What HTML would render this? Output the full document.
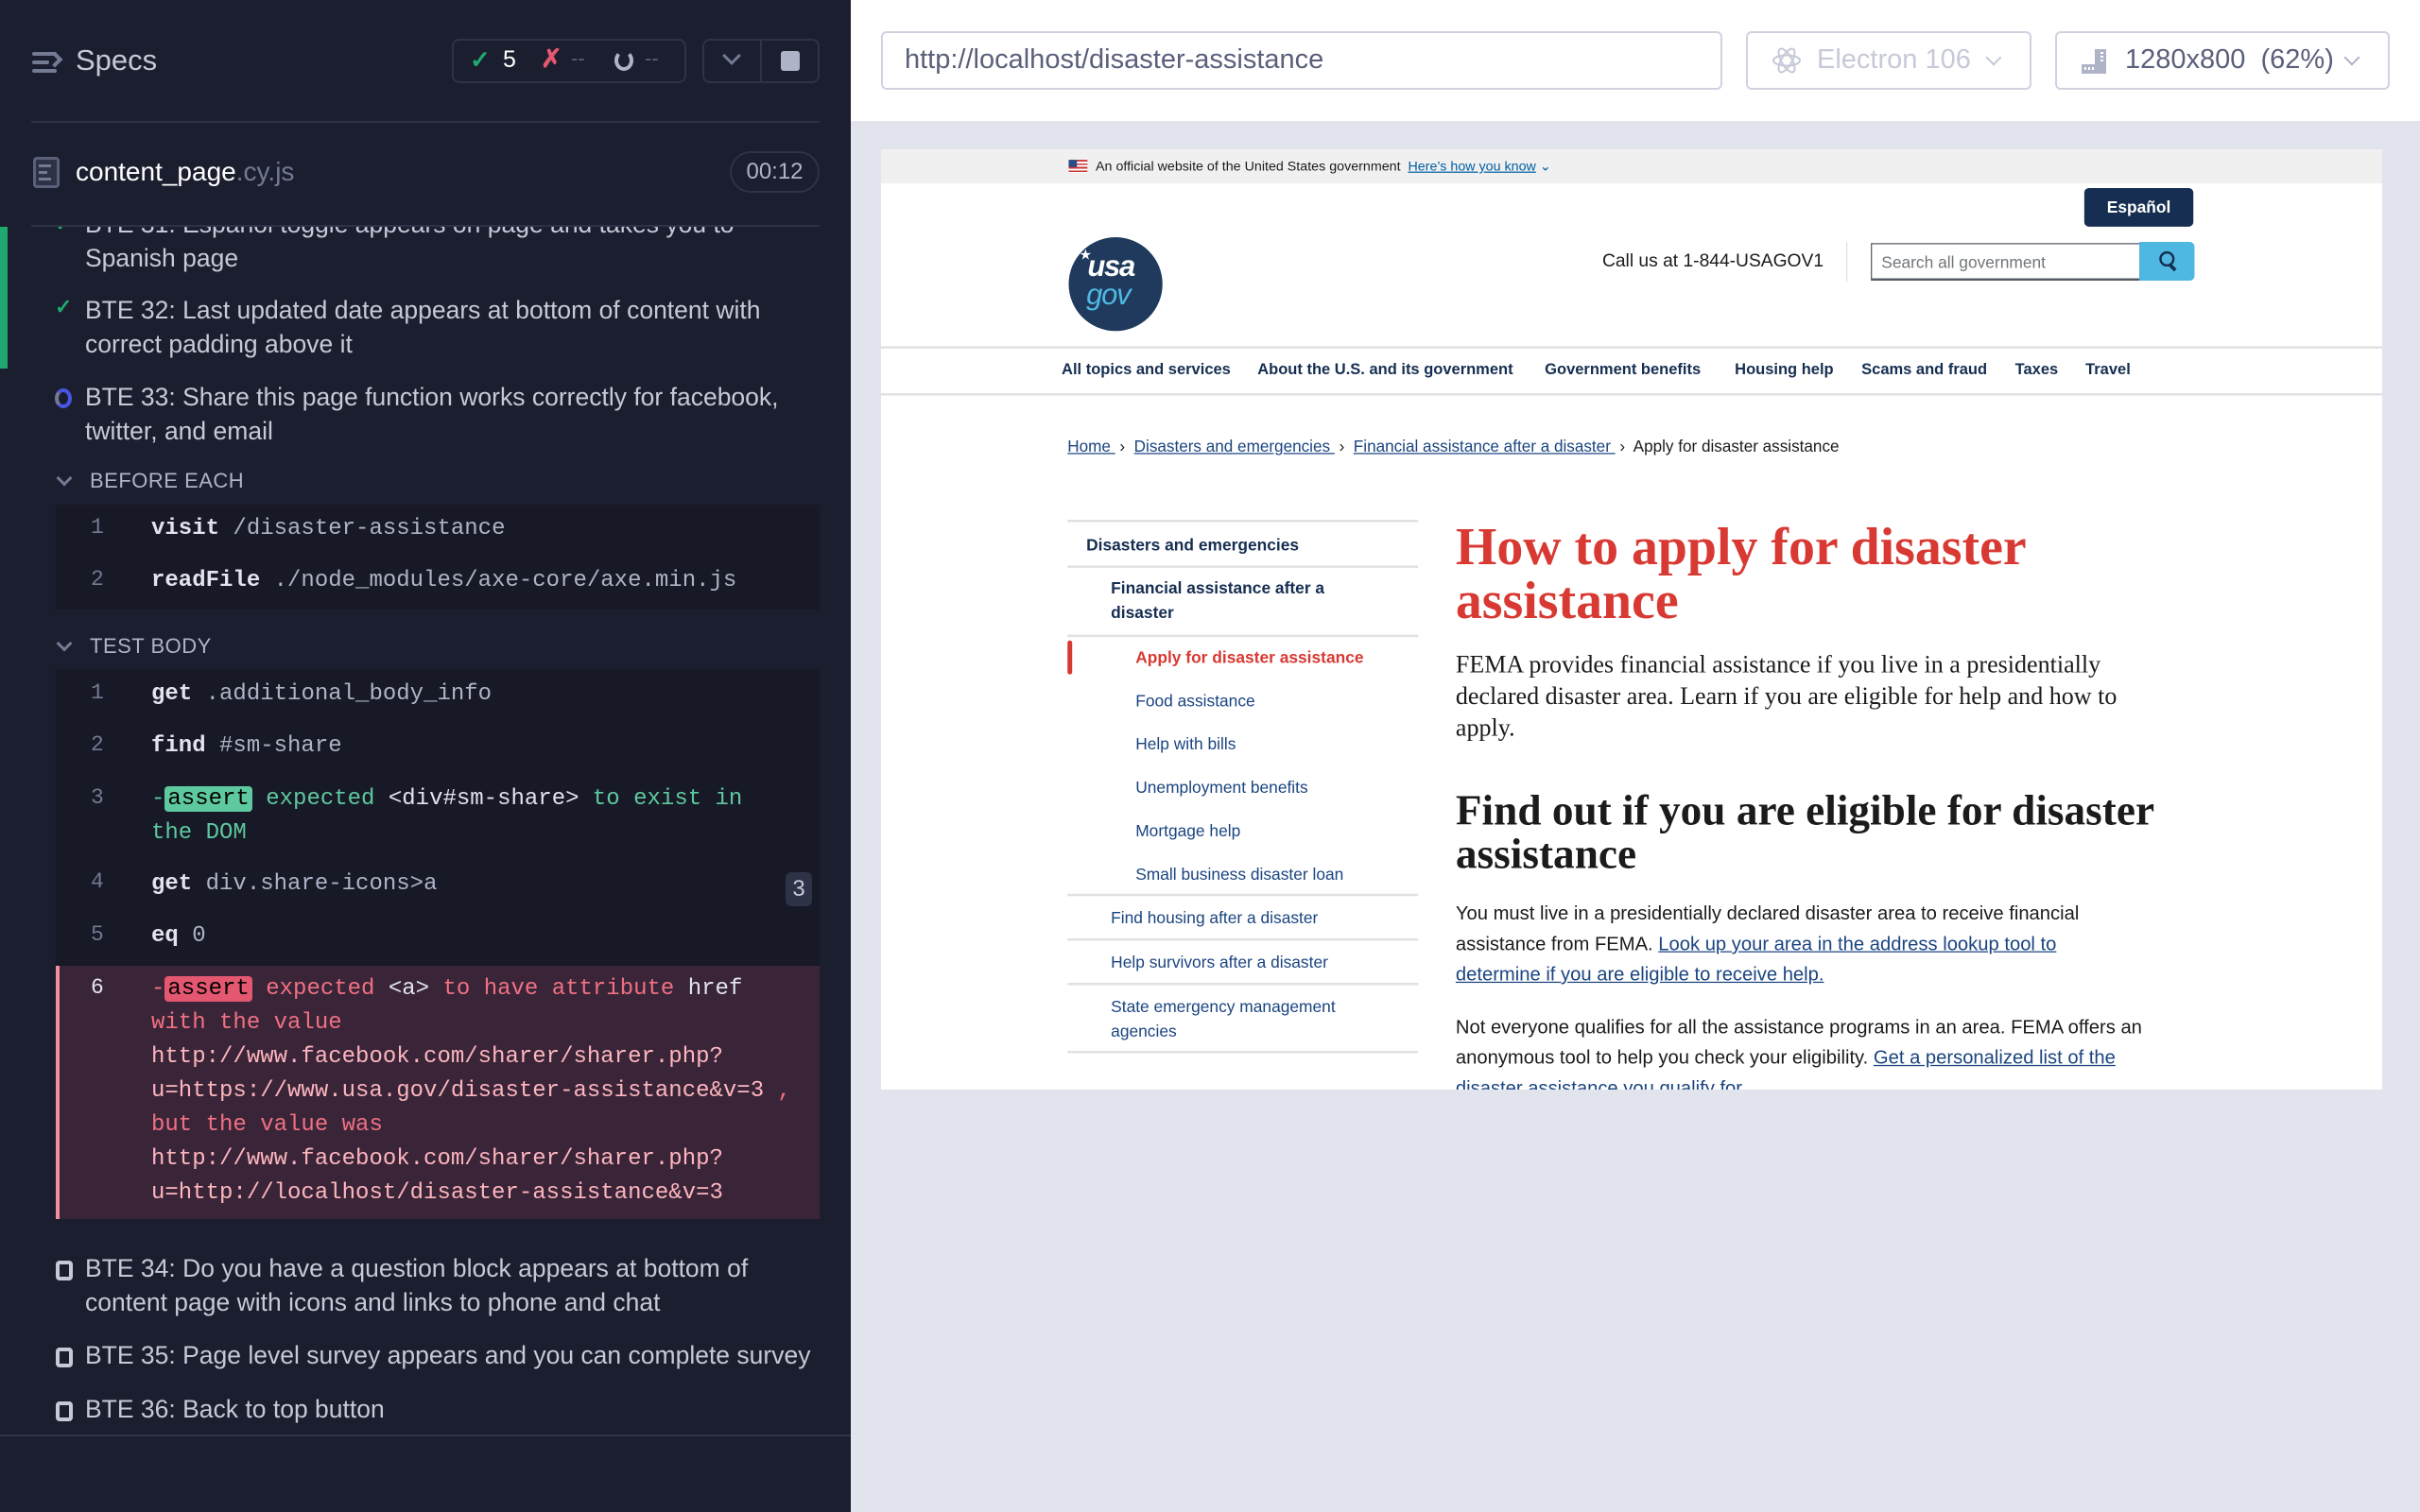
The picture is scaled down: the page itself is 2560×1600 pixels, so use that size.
<!DOCTYPE html>
<html><head><meta charset="utf-8">
<style>
*{margin:0;padding:0;box-sizing:border-box}
body{width:2560px;height:1600px;overflow:hidden;background:#e1e3ed;font-family:"Liberation Sans",sans-serif;position:relative}
.a{position:absolute;white-space:nowrap}
#left{position:absolute;left:0;top:0;width:900px;height:1600px;background:#1b1e2e;overflow:hidden}
.t{position:absolute;left:90px;font-size:26.5px;line-height:36px;color:#c6c9d8;white-space:nowrap}
.code{font-family:"Liberation Mono",monospace;font-size:24px;line-height:36px;position:absolute;white-space:nowrap}
.ln{position:absolute;left:96px;font-family:"Liberation Mono",monospace;font-size:23px;color:#747994}
.kw{color:#e1e3ed;font-weight:bold}
.mu{color:#afb3c7}
.g{color:#5ec99e}
.r{color:#f07083}
.box{position:absolute;border:2px solid #2e3247;border-radius:8px}
.hdr{position:absolute;left:95px;font-size:22px;color:#afb3c7;letter-spacing:0.5px}
.chev{position:absolute;left:62px;width:12px;height:12px;border-right:3px solid #747994;border-bottom:3px solid #747994;transform:rotate(45deg)}
.cb{position:absolute;left:59px;width:18px;height:21px;border:4px solid #c6c9d8;border-radius:4px}
#pg{position:absolute;left:932px;top:158px;width:1280px;height:802px;transform-origin:0 0;transform:scale(1.2406);background:#fff;overflow:hidden;font-family:"Liberation Sans",sans-serif}
.nav{position:absolute;top:180px;font-size:13.3px;font-weight:bold;color:#162e51}
.sb{position:absolute;font-size:14px;color:#1a4480;line-height:21px}
.hl{position:absolute;left:159px;width:299px;height:2px;background:#dfe1e2}
a{color:#1a4480;text-decoration:underline}
</style></head><body>
<div id="left">
  <div class="a" style="left:34px;top:55px;width:26px;height:4px;background:#747994;border-radius:2px"></div>
  <div class="a" style="left:34px;top:64px;width:18px;height:4px;background:#747994;border-radius:2px"></div>
  <div class="a" style="left:34px;top:73px;width:26px;height:4px;background:#747994;border-radius:2px"></div>
  <div class="a" style="left:52px;top:57px;width:12px;height:12px;border-right:4px solid #747994;border-top:4px solid #747994;transform:rotate(45deg)"></div>
  <div class="a" style="left:80px;top:46px;font-size:31px;color:#c6c9d8">Specs</div>
  <div class="box" style="left:478px;top:41px;width:248px;height:47px"></div>
  <div class="a" style="left:497px;top:48px;font-size:26px;color:#1fa971;font-weight:bold">✓</div>
  <div class="a" style="left:532px;top:49px;font-size:25px;color:#fff">5</div>
  <div class="a" style="left:572px;top:47px;font-size:27px;color:#e45770;font-weight:bold">✗</div>
  <div class="a" style="left:604px;top:49px;font-size:22px;color:#5a5f7a">--</div>
  <div class="a" style="left:650px;top:53px;width:20px;height:22px;border:4px solid #afb3c7;border-top-color:transparent;border-radius:50%"></div>
  <div class="a" style="left:682px;top:49px;font-size:22px;color:#5a5f7a">--</div>
  <div class="box" style="left:743px;top:41px;width:124px;height:47px"></div>
  <div class="a" style="left:804px;top:43px;width:2px;height:43px;background:#2e3247"></div>
  <div class="a" style="left:767px;top:52px;width:14px;height:14px;border-right:3px solid #747994;border-bottom:3px solid #747994;transform:rotate(45deg)"></div>
  <div class="a" style="left:826px;top:54px;width:20px;height:21px;background:#afb3c7;border-radius:3px"></div>
  <div class="a" style="left:33px;top:128px;width:834px;height:2px;background:#2e3247"></div>
  <div class="a" style="left:35px;top:166px;width:28px;height:33px;border:3px solid #5a5f7a;border-radius:4px;background:#2e3247"></div>
  <div class="a" style="left:41px;top:174px;width:13px;height:3px;background:#747994"></div>
  <div class="a" style="left:41px;top:181px;width:9px;height:3px;background:#747994"></div>
  <div class="a" style="left:41px;top:188px;width:13px;height:3px;background:#747994"></div>
  <div class="a" style="left:80px;top:166px;font-size:28px;color:#fff">content_page<span style="color:#747994">.cy.js</span></div>
  <div class="a" style="left:772px;top:160px;width:95px;height:44px;border:2px solid #2e3247;border-radius:22px;color:#afb3c7;font-size:24px;text-align:center;line-height:40px">00:12</div>
  <div class="a" style="left:33px;top:238px;width:834px;height:2px;background:#2e3247"></div>
  <div style="position:absolute;left:0;top:240px;width:900px;height:1280px;overflow:hidden">
    <div class="a" style="left:0;top:0;width:8px;height:150px;background:#1fa971"></div>
    <div class="t" style="top:-21px">BTE 31: Español toggle appears on page and takes you to<br>Spanish page</div>
    <div class="a" style="left:58px;top:-16px;font-size:22px;color:#1fa971;font-weight:bold">✓</div>
    <div class="a" style="left:58px;top:72px;font-size:22px;color:#1fa971;font-weight:bold">✓</div>
    <div class="t" style="top:70px">BTE 32: Last updated date appears at bottom of content with<br>correct padding above it</div>
    <div class="a" style="left:58px;top:171px;width:18px;height:21px;border:4px solid #4956e3;border-left-color:#747994;border-radius:50%"></div>
    <div class="t" style="top:162px">BTE 33: Share this page function works correctly for facebook,<br>twitter, and email</div>
    <div class="chev" style="top:260px"></div>
    <div class="hdr" style="top:256px">BEFORE EACH</div>
    <div class="a" style="left:59px;top:294px;width:808px;height:111px;background:#171926"></div>
    <div class="ln" style="top:305px">1</div><div class="code" style="left:160px;top:302px"><span class="kw">visit</span>  <span class="mu">/disaster-assistance</span></div>
    <div class="ln" style="top:360px">2</div><div class="code" style="left:160px;top:357px"><span class="kw">readFile</span>  <span class="mu">./node_modules/axe-core/axe.min.js</span></div>
    <div class="chev" style="top:435px"></div>
    <div class="hdr" style="top:431px">TEST BODY</div>
    <div class="a" style="left:59px;top:468px;width:808px;height:582px;background:#171926"></div>
    <div class="ln" style="top:480px">1</div><div class="code" style="left:160px;top:477px"><span class="kw">get</span>  <span class="mu">.additional_body_info</span></div>
    <div class="ln" style="top:535px">2</div><div class="code" style="left:160px;top:532px"><span class="kw">find</span>  <span class="mu">#sm-share</span></div>
    <div class="ln" style="top:591px">3</div><div class="code g" style="left:160px;top:588px">-<span style="background:#5ec99e;color:#000;border-radius:4px;padding:0 3px">assert</span>  expected  <span style="color:#e1e3ed">&lt;div#sm-share&gt;</span>  to exist in<br>the DOM</div>
    <div class="ln" style="top:680px">4</div><div class="code" style="left:160px;top:678px"><span class="kw">get</span>  <span class="mu">div.share-icons&gt;a</span></div>
    <div class="a" style="left:831px;top:683px;width:28px;height:36px;background:#2e3247;border-radius:6px;color:#c6c9d8;font-size:24px;text-align:center;line-height:36px">3</div>
    <div class="ln" style="top:736px">5</div><div class="code" style="left:160px;top:733px"><span class="kw">eq</span>  <span class="mu">0</span></div>
    <div class="a" style="left:59px;top:782px;width:808px;height:268px;background:#3a2538;border-left:4px solid #f28f9f"></div>
    <div class="ln" style="top:792px;color:#e1e3ed">6</div>
    <div class="code r" style="left:160px;top:789px">-<span style="background:#e45770;color:#000;border-radius:4px;padding:0 3px">assert</span>  expected  <span style="color:#e1e3ed">&lt;a&gt;</span>  to have attribute  <span style="color:#e1e3ed">href</span><br>with the value<br><span style="color:#fdb5be"> http://www.facebook.com/sharer/sharer.php?<br>u=https://www.usa.gov/disaster-assistance&amp;v=3</span> ,<br>but the value was<br><span style="color:#fdb5be"> http://www.facebook.com/sharer/sharer.php?<br>u=http://localhost/disaster-assistance&amp;v=3</span></div>
    <div class="cb" style="top:1094px"></div>
    <div class="t" style="top:1084px">BTE 34: Do you have a question block appears at bottom of<br>content page with icons and links to phone and chat</div>
    <div class="cb" style="top:1186px"></div>
    <div class="t" style="top:1176px">BTE 35: Page level survey appears and you can complete survey</div>
    <div class="cb" style="top:1243px"></div>
    <div class="t" style="top:1233px">BTE 36: Back to top button</div>
  </div>
  <div class="a" style="left:0;top:1518px;width:900px;height:2px;background:#2e3247"></div>
</div>

<div class="a" style="left:900px;top:0;width:1660px;height:128px;background:#fff"></div>
<div class="a" style="left:932px;top:33px;width:890px;height:62px;border:2px solid #d0d2e0;border-radius:6px;background:#fff"></div>
<div class="a" style="left:957px;top:47px;font-size:29px;color:#5a5f7a">http://localhost/disaster-assistance</div>
<div class="a" style="left:1847px;top:33px;width:302px;height:62px;border:2px solid #d0d2e0;border-radius:6px"></div>
<svg class="a" style="left:1874px;top:48px" width="32" height="32" viewBox="0 0 32 32"><g fill="none" stroke="#c6c9d8" stroke-width="2"><ellipse cx="16" cy="16" rx="14" ry="5.5"/><ellipse cx="16" cy="16" rx="14" ry="5.5" transform="rotate(60 16 16)"/><ellipse cx="16" cy="16" rx="14" ry="5.5" transform="rotate(120 16 16)"/></g></svg>
<div class="a" style="left:1922px;top:47px;font-size:29px;color:#c6c9d8">Electron 106</div>
<div class="a" style="left:2103px;top:55px;width:12px;height:12px;border-right:2px solid #c6c9d8;border-bottom:2px solid #c6c9d8;transform:rotate(45deg)"></div>
<div class="a" style="left:2174px;top:33px;width:354px;height:62px;border:2px solid #d0d2e0;border-radius:6px"></div>
<svg class="a" style="left:2200px;top:48px" width="32" height="32" viewBox="0 0 32 32"><path d="M2 30V20h14V4h12v26z" fill="#afb3c7"/><path d="M6 26v-3M10 26v-3M14 26v-3M22 8h3M22 12h3M22 16h3" stroke="#fff" stroke-width="2"/></svg>
<div class="a" style="left:2248px;top:47px;font-size:29px;color:#5a5f7a">1280x800 &nbsp;(62%)</div>
<div class="a" style="left:2482px;top:55px;width:12px;height:12px;border-right:2px solid #afb3c7;border-bottom:2px solid #afb3c7;transform:rotate(45deg)"></div>

<div id="pg">
  <div class="a" style="left:0;top:0;width:1280px;height:29px;background:#f0f0f0"></div>
  <div class="a" style="left:160px;top:9px;width:16px;height:11px;background:repeating-linear-gradient(#c33 0 1.5px,#fff 1.5px 3px)"></div>
  <div class="a" style="left:160px;top:9px;width:7px;height:6px;background:#2b4a8a"></div>
  <div class="a" style="left:183px;top:7px;font-size:11.5px;color:#1b1b1b">An official website of the United States government &nbsp;<span style="color:#005ea2;text-decoration:underline">Here’s how you know</span> <span style="color:#005ea2">⌄</span></div>
  <div class="a" style="left:1026px;top:33px;width:93px;height:33px;background:#162e51;border-radius:4px;color:#fff;font-weight:bold;font-size:14px;text-align:center;line-height:33px">Español</div>
  <div class="a" style="left:160px;top:75px;width:80px;height:80px;border-radius:50%;background:#1f3a5c"></div>
  <div class="a" style="left:176px;top:86px;font-size:25px;font-weight:bold;font-style:italic;color:#fff;letter-spacing:-1px">usa</div>
  <div class="a" style="left:175px;top:110px;font-size:25px;font-style:italic;color:#4fb8e2;letter-spacing:-1px">gov</div>
  <div class="a" style="left:169px;top:83px;font-size:12px;color:#fff">★</div>
  <div class="a" style="left:615px;top:87px;font-size:15.5px;color:#1b1b1b">Call us at 1-844-USAGOV1</div>
  <div class="a" style="left:823px;top:79px;width:1px;height:34px;background:#dfe1e2"></div>
  <div class="a" style="left:844px;top:80px;width:230px;height:32px;border:1px solid #565c65;border-bottom-width:2px;background:#fff"></div>
  <div class="a" style="left:853px;top:88px;font-size:14px;color:#71767a">Search all government</div>
  <div class="a" style="left:1073px;top:79px;width:47px;height:33px;background:#4fb8e2;border-radius:0 4px 4px 0"></div>
  <div class="a" style="left:1090px;top:87px;width:13px;height:13px;border:2.5px solid #162e51;border-radius:50%"></div>
  <div class="a" style="left:1100px;top:98px;width:3px;height:6px;background:#162e51;transform:rotate(-45deg)"></div>
  <div class="a" style="left:0;top:168px;width:1280px;height:2px;background:#dfe1e2"></div>
  <div class="nav" style="left:154px">All topics and services</div>
  <div class="nav" style="left:321px">About the U.S. and its government</div>
  <div class="nav" style="left:566px">Government benefits</div>
  <div class="nav" style="left:728px">Housing help</div>
  <div class="nav" style="left:836px">Scams and fraud</div>
  <div class="nav" style="left:967px">Taxes</div>
  <div class="nav" style="left:1027px">Travel</div>
  <div class="a" style="left:0;top:208px;width:1280px;height:2px;background:#dfe1e2"></div>
  <div class="a" style="left:159px;top:246px;font-size:13.8px;color:#1b1b1b"><a>Home </a>&nbsp;›&nbsp; <a>Disasters and emergencies </a>&nbsp;›&nbsp; <a>Financial assistance after a disaster </a>&nbsp;›&nbsp; Apply for disaster assistance</div>
  <div class="hl" style="top:316px"></div>
  <div class="sb" style="left:175px;top:327px;font-weight:bold;color:#162e51">Disasters and emergencies</div>
  <div class="hl" style="top:355px"></div>
  <div class="sb" style="left:196px;top:364px;font-weight:bold;color:#162e51">Financial assistance after a<br>disaster</div>
  <div class="hl" style="top:414px"></div>
  <div class="a" style="left:159px;top:419px;width:4px;height:29px;background:#d83933;border-radius:2px"></div>
  <div class="sb" style="left:217px;top:423px;font-weight:bold;color:#d83933">Apply for disaster assistance</div>
  <div class="sb" style="left:217px;top:460px">Food assistance</div>
  <div class="sb" style="left:217px;top:497px">Help with bills</div>
  <div class="sb" style="left:217px;top:534px">Unemployment benefits</div>
  <div class="sb" style="left:217px;top:571px">Mortgage help</div>
  <div class="sb" style="left:217px;top:608px">Small business disaster loan</div>
  <div class="hl" style="top:635px"></div>
  <div class="sb" style="left:196px;top:645px">Find housing after a disaster</div>
  <div class="hl" style="top:673px"></div>
  <div class="sb" style="left:196px;top:683px">Help survivors after a disaster</div>
  <div class="hl" style="top:711px"></div>
  <div class="sb" style="left:196px;top:721px">State emergency management<br>agencies</div>
  <div class="hl" style="top:769px"></div>
  <div class="a" style="left:490px;top:316px;font-family:'Liberation Serif',serif;font-weight:bold;font-size:45px;line-height:46px;color:#d83933">How to apply for disaster<br>assistance</div>
  <div class="a" style="left:490px;top:426px;font-family:'Liberation Serif',serif;font-size:21px;line-height:27px;color:#1b1b1b">FEMA provides financial assistance if you live in a presidentially<br>declared disaster area. Learn if you are eligible for help and how to<br>apply.</div>
  <div class="a" style="left:490px;top:545px;font-family:'Liberation Serif',serif;font-weight:bold;font-size:36.5px;line-height:37px;color:#1b1b1b">Find out if you are eligible for disaster<br>assistance</div>
  <div class="a" style="left:490px;top:639px;font-size:16.3px;line-height:26px;color:#1b1b1b">You must live in a presidentially declared disaster area to receive financial<br>assistance from FEMA. <a>Look up your area in the address lookup tool to</a><br><a>determine if you are eligible to receive help.</a></div>
  <div class="a" style="left:490px;top:736px;font-size:16.3px;line-height:26px;color:#1b1b1b">Not everyone qualifies for all the assistance programs in an area. FEMA offers an<br>anonymous tool to help you check your eligibility. <a>Get a personalized list of the</a><br><a>disaster assistance you qualify for.</a></div>
</div>
</body></html>
